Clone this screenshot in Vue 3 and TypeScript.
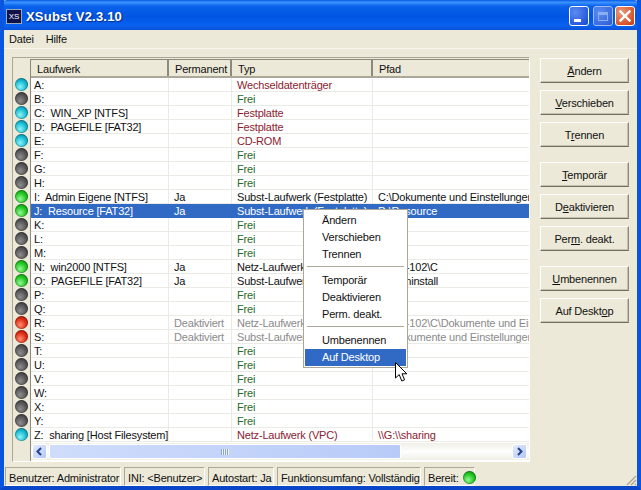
<script setup lang="ts">
type Row = {
  drive: string;
  perm?: string;
  typ: string;
  path?: string;
  led: string;
  tone?: string;
  pathTone?: string;
  selected?: boolean;
};

const frei = (drive: string, led = "gray"): Row => ({ drive, typ: "Frei", led });

const rows: Row[] = [
  { drive: "A:", typ: "Wechseldatenträger", led: "cyan", tone: "maroon" },
  frei("B:"),
  { drive: "C:  WIN_XP [NTFS]", typ: "Festplatte", led: "cyan", tone: "maroon" },
  { drive: "D:  PAGEFILE [FAT32]", typ: "Festplatte", led: "cyan", tone: "maroon" },
  { drive: "E:", typ: "CD-ROM", led: "cyan", tone: "maroon" },
  frei("F:"),
  frei("G:"),
  frei("H:"),
  { drive: "I:  Admin Eigene [NTFS]", perm: "Ja", typ: "Subst-Laufwerk (Festplatte)", path: "C:\\Dokumente und Einstellungen\\Admin", led: "green" },
  { drive: "J:  Resource [FAT32]", perm: "Ja", typ: "Subst-Laufwerk (Festplatte)", path: "D:\\Resource", led: "green", selected: true },
  frei("K:"),
  frei("L:"),
  frei("M:"),
  { drive: "N:  win2000 [NTFS]", perm: "Ja", typ: "Netz-Laufwerk (VPC)", path: "\\\\VPC-102\\C", led: "green" },
  { drive: "O:  PAGEFILE [FAT32]", perm: "Ja", typ: "Subst-Laufwerk (Festplatte)", path: "D:\\_Uninstall", led: "green" },
  frei("P:"),
  frei("Q:"),
  { drive: "R:", perm: "Deaktiviert", typ: "Netz-Laufwerk (VPC)", path: "\\\\VPC-102\\C\\Dokumente und Einstellungen", led: "red", tone: "muted", pathTone: "muted" },
  { drive: "S:", perm: "Deaktiviert", typ: "Subst-Laufwerk (Festplatte)", path: "C:\\Dokumente und Einstellungen\\Admin", led: "red", tone: "muted", pathTone: "muted" },
  frei("T:"),
  frei("U:"),
  frei("V:"),
  frei("W:"),
  frei("X:"),
  frei("Y:"),
  { drive: "Z:  sharing [Host Filesystem]", typ: "Netz-Laufwerk (VPC)", path: "\\\\G:\\\\sharing", led: "cyan", tone: "maroon", pathTone: "maroon" },
];

const buttonGroups = [
  [["", "Ä", "ndern"], ["", "V", "erschieben"], ["T", "r", "ennen"]],
  [["", "T", "emporär"], ["D", "e", "aktivieren"], ["Per", "m", ". deakt."]],
  [["", "U", "mbenennen"], ["Auf Deskt", "o", "p"]],
];

const menuGroups = [
  ["Ändern", "Verschieben", "Trennen"],
  ["Temporär", "Deaktivieren", "Perm. deakt."],
  ["Umbenennen", "Auf Desktop"],
];
</script>

<template>
  <div class="window">
    <header class="titlebar">
      <span class="appicon">XS</span>
      <span class="title">XSubst V2.3.10</span>
      <div class="caption">
        <span class="cbtn min"><i></i></span>
        <span class="cbtn max"><i></i></span>
        <span class="cbtn close">
          <svg width="14" height="14" viewBox="0 0 14 14">
            <path d="M2.5 2.5 11.5 11.5M11.5 2.5 2.5 11.5" stroke="#fff" stroke-width="2.4" stroke-linecap="square" />
          </svg>
        </span>
      </div>
    </header>

    <nav class="menubar">
      <span>Datei</span>
      <span>Hilfe</span>
    </nav>

    <main class="body">
      <section class="list">
        <div class="gutter">
          <span v-for="r in rows" :key="r.drive" class="led" :class="r.led"></span>
        </div>
        <div class="table">
          <div class="head">
            <span>Laufwerk</span>
            <span>Permanent</span>
            <span>Typ</span>
            <span>Pfad</span>
          </div>
          <div
            v-for="r in rows"
            :key="r.drive"
            class="row"
            :class="{ selected: r.selected }"
          >
            <span class="drive">{{ r.drive }}</span>
            <span class="perm" :class="r.tone === 'muted' ? 'muted' : ''">{{ r.perm }}</span>
            <span class="typ" :class="r.typ === 'Frei' ? 'free' : r.tone">{{ r.typ }}</span>
            <span class="path" :class="r.pathTone">{{ r.path }}</span>
          </div>
          <div class="hscroll">
            <span class="sbtn">
              <svg width="9" height="9" viewBox="0 0 9 9"><path d="M6 1 2.5 4.5 6 8" fill="none" stroke="#27408b" stroke-width="2" /></svg>
            </span>
            <span class="thumb"><i></i></span>
            <span class="track"></span>
            <span class="sbtn">
              <svg width="9" height="9" viewBox="0 0 9 9"><path d="M3 1 6.5 4.5 3 8" fill="none" stroke="#27408b" stroke-width="2" /></svg>
            </span>
          </div>
        </div>
      </section>

      <aside class="actions">
        <div v-for="(group, g) in buttonGroups" :key="g" class="group">
          <button v-for="b in group" :key="b.join('')" class="btn">{{ b[0] }}<u>{{ b[1] }}</u>{{ b[2] }}</button>
        </div>
      </aside>
    </main>

    <footer class="status">
      <span class="panel p1">Benutzer: Administrator</span>
      <span class="panel p2">INI: &lt;Benutzer&gt;</span>
      <span class="panel p3">Autostart: Ja</span>
      <span class="panel p4">Funktionsumfang: Vollständig</span>
      <span class="panel p5">Bereit:<span class="led green small"></span></span>
      <svg class="grip" width="12" height="12" viewBox="0 0 12 12">
        <path d="M11 2 2 11M11 6 6 11M11 10 10 11" stroke="#aca899" stroke-width="1.4" fill="none" />
      </svg>
    </footer>

    <div class="popup">
      <template v-for="(group, g) in menuGroups" :key="g">
        <hr v-if="g > 0" />
        <div
          v-for="m in group"
          :key="m"
          class="item"
          :class="{ hot: m === 'Auf Desktop' }"
        >{{ m }}</div>
      </template>
    </div>

    <svg class="cursor" width="13" height="21" viewBox="0 0 13 21">
      <path d="M.5 .5V16L4.2 12.6 6.8 19 9.6 17.8 7 11.8H11.8Z" fill="#fff" stroke="#000" stroke-width="1" stroke-linejoin="miter" />
    </svg>
  </div>
</template>

<style scoped>
.window{position:relative;width:641px;height:490px;box-sizing:border-box;display:flex;flex-direction:column;background:#ece9d8;border-left:4px solid #0a55e0;border-right:4px solid #0a55e0;border-bottom:4px solid #0a46c8;font:11px "Liberation Sans",Arial,sans-serif;letter-spacing:-.18px;color:#111;overflow:hidden}
.titlebar{flex:none;height:30px;margin:0 -4px;padding:0 6px 0 6px;display:flex;align-items:center;background:linear-gradient(#0a5be0 0,#3a93ff 8%,#0a62ea 20%,#0055e2 55%,#0a62f0 85%,#0a50d8 100%);border-radius:7px 7px 0 0}
.appicon{width:16px;height:15px;margin-top:2px;background:#10104a;border:1px solid #9ab;box-sizing:border-box;color:#fff;font-size:8px;line-height:13px;text-align:center}
.title{margin:2px 0 0 4px;color:#fff;font:bold 13px "Liberation Sans",Arial,sans-serif;letter-spacing:.2px;text-shadow:1px 1px 1px #0a2a80}
.caption{margin-left:auto;display:flex;gap:2px;margin-top:2px}
.cbtn{width:20px;height:20px;box-sizing:border-box;border:1px solid #fff;border-radius:3px;display:flex;align-items:center;justify-content:center;position:relative}
.min{margin-right:2px;background:radial-gradient(circle at 30% 30%,#5a8cf0,#2a5ae0 70%,#1a46c0)}
.min i{position:absolute;left:4px;bottom:3px;width:7px;height:3px;background:#fff}
.max{background:radial-gradient(circle at 30% 30%,#5a8cf0,#3a6ae0 70%,#2a56c8);border-color:#9fbcf0}
.max i{width:10px;height:9px;border:1px solid #8aaef0;border-top-width:3px;box-sizing:border-box}
.close{background:radial-gradient(circle at 30% 30%,#ea9a78,#d8542c 70%,#b83a18)}
.menubar{flex:none;height:18px;padding-left:5px;display:flex;gap:12px;align-items:center;border-bottom:1px solid #f8f6ee;font-size:11px}
.body{flex:1;min-height:0;display:flex;padding:8px 0 5px 8px}
.list{width:518px;box-sizing:border-box;display:flex;background:#ece9d8;border:1px solid #aca899;border-right-color:#fff;border-bottom-color:#fff;padding-top:1px}
.gutter{width:17px;flex:none;padding-top:19px;display:flex;flex-direction:column;align-items:center;border-right:1px solid #8c8a7c}
.led{width:13px;height:13px;margin-bottom:1px;border-radius:50%;flex:none;display:inline-block;box-shadow:inset 0 0 0 1px rgba(0,0,0,.25)}
.led.cyan{background:radial-gradient(circle at 40% 68%,#8ff4f8,#16bcd4 50%,#0a6a84)}
.led.gray{background:radial-gradient(circle at 40% 68%,#8e8e8e,#565656 50%,#262626)}
.led.green{background:radial-gradient(circle at 40% 68%,#96f896,#20c620 50%,#0a720a)}
.led.red{background:radial-gradient(circle at 40% 68%,#ff8e74,#e02c14 50%,#861208)}
.led.small{vertical-align:top;margin:0 0 0 4px}
.table{flex:1;min-width:0;display:flex;flex-direction:column;background:#fff;overflow:hidden}
.head,.row{display:grid;grid-template-columns:138px 63px 141px 157px;white-space:pre}
.head{height:19px;box-sizing:border-box;background:#ece9d8;border-top:1px solid #8c8a7c;border-bottom:2px solid #aca899;flex:none}
.head span{padding:3px 0 0 6px;border-right:2px solid #8c8a7c;box-sizing:border-box;line-height:13px}
.head span:last-child{border-right:0}
.row{height:14px;line-height:14px;box-sizing:border-box;border-bottom:1px solid #ebebe6;flex:none}
.row span{overflow:hidden;border-right:1px solid #ebebe6;box-sizing:border-box}
.row span:last-child{border-right:0}
.drive{padding-left:3px}
.perm{padding-left:5px}
.typ{padding-left:5px}
.path{padding-left:5px}
.free{color:#2a6a2a}
.maroon{color:#8c1c30}
.muted{color:#8a8a8a}
.row.selected{background:#316ac5;color:#fff;border-bottom-color:#316ac5}
.row.selected span{border-right-color:#316ac5}
.hscroll{height:17px;margin-top:1px;display:flex;align-items:center;background:linear-gradient(#f0efe6,#fefefe 50%,#f0efe6);flex:none;padding:0 2px 0 1px;box-sizing:border-box}
.sbtn{width:15px;height:15px;border-radius:2px;border:1px solid #fff;box-sizing:border-box;background:linear-gradient(135deg,#e2ebfe,#b4c8f6);display:flex;align-items:center;justify-content:center;flex:none}
.thumb{width:352px;height:15px;margin-left:2px;box-sizing:border-box;border:1px solid #fff;border-radius:2px;background:linear-gradient(90deg,#cfdcfb,#b8cbf8);display:flex;align-items:center;justify-content:center;flex:none}
.thumb i{width:8px;height:6px;background:repeating-linear-gradient(90deg,#8aa4dc 0 1px,#eef3ff 1px 2px)}
.track{flex:1}
.actions{width:89px;margin:1px 0 0 10px;display:flex;flex-direction:column;gap:15px}
.group{display:flex;flex-direction:column;gap:7px}
.btn{height:25px;padding:0;background:#ece9d8;border:1px solid;border-color:#fff #8c8a7c #716f64 #fff;box-shadow:inset -1px -1px 0 #c4c1b0;font:11px "Liberation Sans",Arial,sans-serif;letter-spacing:-.18px;color:#111}
.status{flex:none;height:19px;display:flex;align-items:stretch;gap:3px;padding-left:1px;position:relative}
.panel{box-sizing:border-box;padding:3px 0 0 3px;border:1px solid;border-color:#aca899 #fff #fff #aca899;line-height:14px;white-space:pre}
.p1{width:116px}
.p2{width:81px}
.p3{width:66px}
.p4{width:144px}
.p5{width:51px}
.grip{position:absolute;right:0;bottom:0}
.popup{position:absolute;left:299px;top:209px;width:105px;box-sizing:border-box;padding:2px 1px 1px;background:#fff;border:1px solid #aca899;font-size:11px;color:#111}
.item{height:17px;line-height:17px;padding-left:17px}
.item.hot{background:#316ac5;color:#fff}
.popup hr{margin:3px 2px 5px;height:1px;border:0;background:#aca899}
.cursor{position:absolute;left:391px;top:362px}
</style>

<style>
html,body{margin:0;background:#ece9d8}
</style>
